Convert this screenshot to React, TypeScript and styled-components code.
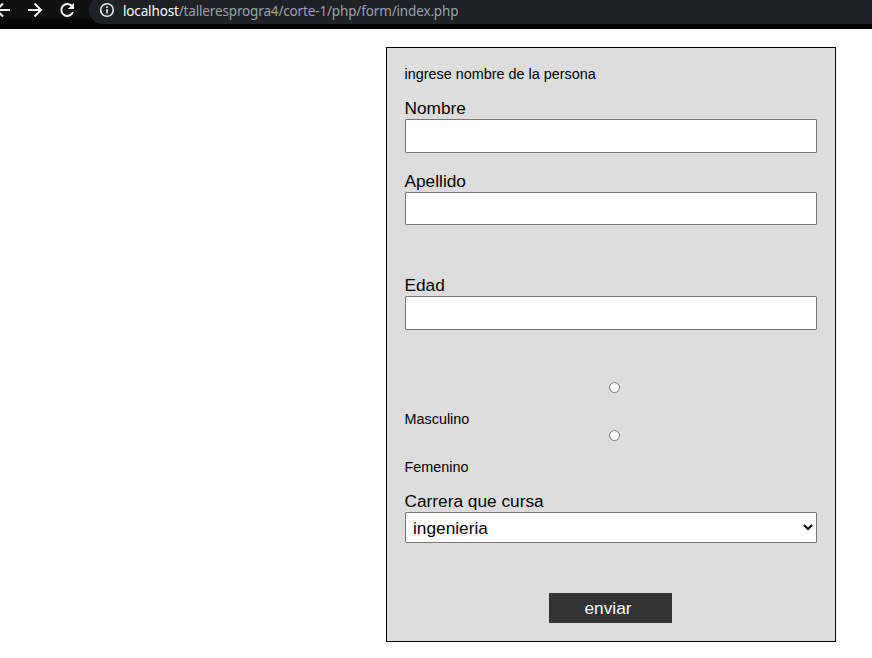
import React from "react";
import styled, { createGlobalStyle } from "styled-components";

const GlobalStyle = createGlobalStyle`
  body {
    margin: 0;
    background: #fff;
    overflow: hidden;
    color: #000;
    font-family: "Liberation Sans", Arial, sans-serif;
  }
  * { box-sizing: border-box; }
`;

const BrowserBar = styled.header`
  display: flex;
  align-items: flex-start;
  height: 29px;
  background: linear-gradient(#101010 0 18px, #050505 20px, #020202);
`;

const NavIcons = styled.svg`
  display: block;
  flex: none;
  width: 89px;
  height: 24px;
  fill: none;
  stroke: #f1f1f1;
  stroke-width: 2;
`;

const AddressBar = styled.div`
  display: flex;
  flex: 1;
  height: 28px;
  margin-top: -4px;
  padding: 5px 0 0 10px;
  background: #202124;
  border-radius: 14px 0 0 14px;
  color: #9aa0a6;
  font: 13.5px/20px "Noto Sans", "Open Sans", sans-serif;
  white-space: nowrap;
`;

const InfoIcon = styled.svg`
  flex: none;
  width: 16px;
  height: 20px;
  margin: -1px 8px 0 0;
  fill: none;
  stroke: #e8eaed;
  stroke-width: 1.6;
`;

const Url = styled.span`
  letter-spacing: -0.15px;
`;

const Host = styled.span`
  color: #fff;
`;

const Form = styled.form`
  width: 450px;
  height: 595px;
  margin: 18px 0 0 386px;
  padding: 18px 18px 0;
  background: #ddd;
  border: 1px solid #000;
`;

const Note = styled.p<{ $after: number }>`
  margin: 0 0 ${(p) => p.$after}px -0.5px;
  font-size: 14.4px;
  line-height: 16px;
`;

const Field = styled.div<{ $after: number }>`
  display: flex;
  flex-direction: column;
  margin-bottom: ${(p) => p.$after}px;
`;

const Label = styled.label`
  height: 20px;
  margin-left: -0.5px;
  font-size: 17.28px;
  line-height: 18px;
`;

const Input = styled.input<{ $height: number }>`
  width: 412px;
  height: ${(p) => p.$height}px;
  padding: 4px 7px;
  border: 1px solid #767676;
  border-radius: 1px;
  background: #fff;
  font: 17.28px "Liberation Sans", Arial, sans-serif;
`;

const Select = styled.select`
  width: 412px;
  height: 31px;
  padding: 1px 3px 0;
  border: 1px solid #767676;
  border-radius: 1px;
  background-color: #fff;
  color: #000;
  font: 17.28px "Liberation Sans", Arial, sans-serif;
`;

const Radio = styled.input`
  appearance: none;
  display: block;
  width: 11px;
  height: 11px;
  margin: 0 0 18px 204.4px;
  border: 1px solid #767676;
  border-radius: 50%;
  background: #fff;
`;

const Submit = styled.button`
  display: block;
  width: 123px;
  height: 30px;
  margin-left: 144px;
  padding: 0;
  border: 0;
  background: #333;
  color: #fff;
  font: 17.28px/30px "Liberation Sans", Arial, sans-serif;
  text-indent: -5px;
`;

export default function App() {
  return (
    <>
      <GlobalStyle />
      <BrowserBar>
        <NavIcons viewBox="0 0 89 24">
          <path d="M-4 10H10M3 3.5L-3.5 10L3 16.5" />
          <path d="M28 10H41M34.5 3.5L41 10L34.5 16.5" />
          <path d="M72.1 6.2A6 6 0 1 0 73 12" />
          <path d="M74 2.8V9H67.8Z" fill="#f1f1f1" stroke="none" />
        </NavIcons>
        <AddressBar>
          <InfoIcon viewBox="0 0 16 20">
            <circle cx="8" cy="10" r="6.3" />
            <path d="M8 9V13.5M8 6.3V8" />
          </InfoIcon>
          <Url><Host>localhost</Host>/talleresprogra4/corte-1/php/form/index.php</Url>
        </AddressBar>
      </BrowserBar>
      <Form onSubmit={(e) => e.preventDefault()}>
        <Note $after={17}>ingrese nombre de la persona</Note>
        <Field $after={19}>
          <Label htmlFor="nombre">Nombre</Label>
          <Input id="nombre" $height={34} />
        </Field>
        <Field $after={51}>
          <Label htmlFor="apellido">Apellido</Label>
          <Input id="apellido" $height={33} />
        </Field>
        <Field $after={52}>
          <Label htmlFor="edad">Edad</Label>
          <Input id="edad" $height={34} />
        </Field>
        <Radio type="radio" name="genero" aria-label="Masculino" />
        <Note $after={3}>Masculino</Note>
        <Radio type="radio" name="genero" aria-label="Femenino" />
        <Note $after={17}>Femenino</Note>
        <Field $after={50}>
          <Label htmlFor="carrera">Carrera que cursa</Label>
          <Select id="carrera">
            <option>ingenieria</option>
          </Select>
        </Field>
        <Submit>enviar</Submit>
      </Form>
    </>
  );
}
